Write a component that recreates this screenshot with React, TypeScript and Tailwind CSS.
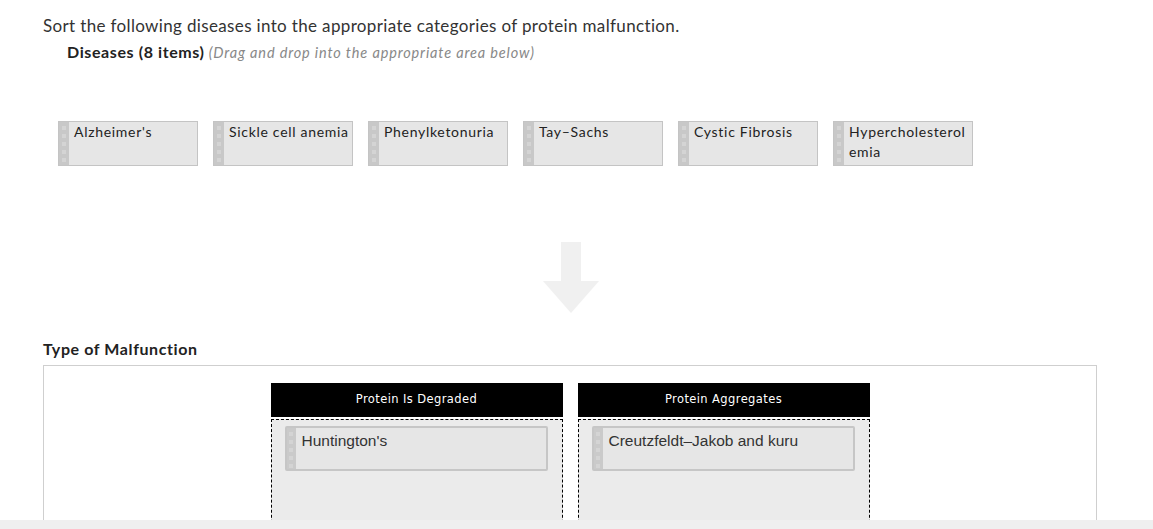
import React from "react";

const diseases = [
  "Alzheimer's",
  "Sickle cell anemia",
  "Phenylketonuria",
  "Tay–Sachs",
  "Cystic Fibrosis",
  "Hypercholesterolemia",
];

const categories = [
  { title: "Protein Is Degraded", items: ["Huntington's"] },
  { title: "Protein Aggregates", items: ["Creutzfeldt–Jakob and kuru"] },
];

function Grip({ className }: { className: string }) {
  return (
    <div className={`flex flex-col items-center gap-[4px] pt-[4px] ${className}`}>
      {[0, 1, 2, 3, 4].map((i) => (
        <span key={i} className="block w-[4px] h-[4px] bg-[#d4d4d4]" />
      ))}
    </div>
  );
}

function DiseaseCard({ label }: { label: string }) {
  return (
    <div className="flex w-[140px] h-[45px] border border-[#c4c4c4] bg-[#e6e6e6]">
      <Grip className="w-[10px] bg-[#c8c8c8]" />
      <div className="flex-1 pl-[5px] pr-[1px] text-[14px] leading-[20px] tracking-[0.7px] text-[#222] break-all">
        {label}
      </div>
    </div>
  );
}

function PlacedCard({ label }: { label: string }) {
  return (
    <div className="flex h-[45px] border-2 border-[#c6c6c6] rounded-[2px] bg-[#e6e6e6]">
      <Grip className="w-[9px] bg-[#cacaca]" />
      <div className="flex-1 pl-[6px] pt-[3px] text-[15.5px] leading-[20px] text-[#333] font-['Liberation_Sans',Arial,sans-serif]">
        {label}
      </div>
    </div>
  );
}

export default function App() {
  return (
    <div className="h-[529px] flex flex-col overflow-hidden bg-white font-['Lato',sans-serif] text-[#333]">
      <div className="flex-1 overflow-hidden pl-[43px] pr-[56px]">
        <p className="pt-[16px] text-[17px] leading-[20px] tracking-[0.35px] whitespace-nowrap">
          Sort the following diseases into the appropriate categories of protein malfunction.
        </p>
        <p className="pl-[24px] pt-[6px] text-[16px] leading-[20px] whitespace-nowrap">
          <span className="font-bold tracking-[0.6px] text-[#222]">Diseases (8 items)</span>{" "}
          <span className="italic text-[14.5px] text-[#888] tracking-[0.85px]">
            (Drag and drop into the appropriate area below)
          </span>
        </p>

        <div className="flex gap-[15px] pl-[15px] mt-[58px]">
          {diseases.map((d) => (
            <DiseaseCard key={d} label={d} />
          ))}
        </div>

        <div className="flex justify-center mt-[76px] pl-[2px]">
          <svg width="56" height="72" viewBox="0 0 56 72">
            <path d="M18 0 H38 V39 H56 L28 71 L0 39 H18 Z" fill="#f0f0f0" />
          </svg>
        </div>

        <h2 className="mt-[25px] text-[16px] leading-[20px] font-bold tracking-[0.6px] text-[#222]">
          Type of Malfunction
        </h2>
        <div className="mt-[6px] h-[300px] border border-[#cfcfcf] pt-[17px] flex justify-center gap-[15px]">
          {categories.map((c) => (
            <div key={c.title} className="w-[292px] flex flex-col gap-[2px]">
              <div className="h-[34px] bg-black text-white flex items-center justify-center text-[11.5px] tracking-[0.4px] font-['DejaVu_Sans',Verdana,sans-serif]">
                {c.title}
              </div>
              <div className="flex-1 border border-dashed border-black bg-[#ebebeb] pt-[6px] pl-[13px] pr-[14px]">
                {c.items.map((it) => (
                  <PlacedCard key={it} label={it} />
                ))}
              </div>
            </div>
          ))}
        </div>
      </div>
      <div className="h-[9px] bg-[#efefef]" />
    </div>
  );
}
